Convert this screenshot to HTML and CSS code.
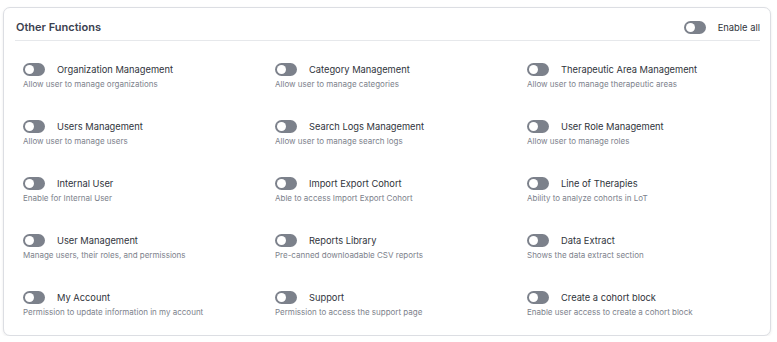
FILE: index.html
```html
<!DOCTYPE html>
<html>

<head>
  <title>Other Functions</title>
  <link rel="stylesheet" href="styles.css">
</head>

<body>
  <div class="card">
    <div class="card-header">
      <span class="card-title">Other Functions</span>
      <label class="enable-all">
        <span class="switch"></span>
        <span>Enable all</span>
      </label>
    </div>

    <div class="functions">
      <div class="func">
        <div class="func-head"><span class="switch"></span><span class="func-name">Organization Management</span></div>
        <p class="func-desc">Allow user to manage organizations</p>
      </div>
      <div class="func">
        <div class="func-head"><span class="switch"></span><span class="func-name">Category Management</span></div>
        <p class="func-desc">Allow user to manage categories</p>
      </div>
      <div class="func">
        <div class="func-head"><span class="switch"></span><span class="func-name">Therapeutic Area Management</span></div>
        <p class="func-desc">Allow user to manage therapeutic areas</p>
      </div>

      <div class="func">
        <div class="func-head"><span class="switch"></span><span class="func-name">Users Management</span></div>
        <p class="func-desc">Allow user to manage users</p>
      </div>
      <div class="func">
        <div class="func-head"><span class="switch"></span><span class="func-name">Search Logs Management</span></div>
        <p class="func-desc">Allow user to manage search logs</p>
      </div>
      <div class="func">
        <div class="func-head"><span class="switch"></span><span class="func-name">User Role Management</span></div>
        <p class="func-desc">Allow user to manage roles</p>
      </div>

      <div class="func">
        <div class="func-head"><span class="switch"></span><span class="func-name">Internal User</span></div>
        <p class="func-desc">Enable for Internal User</p>
      </div>
      <div class="func">
        <div class="func-head"><span class="switch"></span><span class="func-name">Import Export Cohort</span></div>
        <p class="func-desc">Able to access Import Export Cohort</p>
      </div>
      <div class="func">
        <div class="func-head"><span class="switch"></span><span class="func-name">Line of Therapies</span></div>
        <p class="func-desc">Ability to analyze cohorts in LoT</p>
      </div>

      <div class="func">
        <div class="func-head"><span class="switch"></span><span class="func-name">User Management</span></div>
        <p class="func-desc">Manage users, their roles, and permissions</p>
      </div>
      <div class="func">
        <div class="func-head"><span class="switch"></span><span class="func-name">Reports Library</span></div>
        <p class="func-desc">Pre-canned downloadable CSV reports</p>
      </div>
      <div class="func">
        <div class="func-head"><span class="switch"></span><span class="func-name">Data Extract</span></div>
        <p class="func-desc">Shows the data extract section</p>
      </div>

      <div class="func">
        <div class="func-head"><span class="switch"></span><span class="func-name">My Account</span></div>
        <p class="func-desc">Permission to update information in my account</p>
      </div>
      <div class="func">
        <div class="func-head"><span class="switch"></span><span class="func-name">Support</span></div>
        <p class="func-desc">Permission to access the support page</p>
      </div>
      <div class="func">
        <div class="func-head"><span class="switch"></span><span class="func-name">Create a cohort block</span></div>
        <p class="func-desc">Enable user access to create a cohort block</p>
      </div>
    </div>
  </div>
</body>

</html>
```

FILE: styles.css
```css
body {
  margin: 0;
  padding: 7px 6px 0 3px;
  font-family: Inter, 'Noto Sans', sans-serif;
  background-color: #ffffff;
}

.card {
  height: 329px;
  box-sizing: border-box;
  border: 1px solid #dcdee3;
  border-radius: 7px;
  box-shadow: 0 1px 3px rgba(0, 0, 0, 0.08);
  background: #fff;
}

.card-header {
  display: flex;
  align-items: center;
  justify-content: space-between;
  margin: 0 10px 0 11px;
  padding: 11px 0 5px 1px;
  border-bottom: 1px solid #e6e8eb;
}

.card-title {
  font-size: 11px;
  line-height: 16px;
  font-weight: 600;
  color: #3b4150;
}

.enable-all {
  display: flex;
  align-items: center;
  gap: 12px;
  font-size: 9.4px;
  color: #30343b;
}

.switch {
  flex: none;
  position: relative;
  width: 22px;
  height: 13px;
  border-radius: 7px;
  background: #7c818b;
}

.switch::after {
  content: "";
  position: absolute;
  left: 2px;
  top: 2px;
  width: 9px;
  height: 9px;
  border-radius: 50%;
  background: #fff;
}

.functions {
  display: grid;
  grid-template-columns: repeat(3, 1fr);
  column-gap: 28px;
  row-gap: 27px;
  padding: 19px 19px 0 19px;
}

.func-head {
  display: flex;
  align-items: center;
  gap: 12px;
  height: 18px;
}

.func-name {
  font-size: 9.3px;
  color: #30343b;
}

.func-desc {
  margin: 0;
  font-size: 8px;
  line-height: 12px;
  color: #7d828c;
}
```
